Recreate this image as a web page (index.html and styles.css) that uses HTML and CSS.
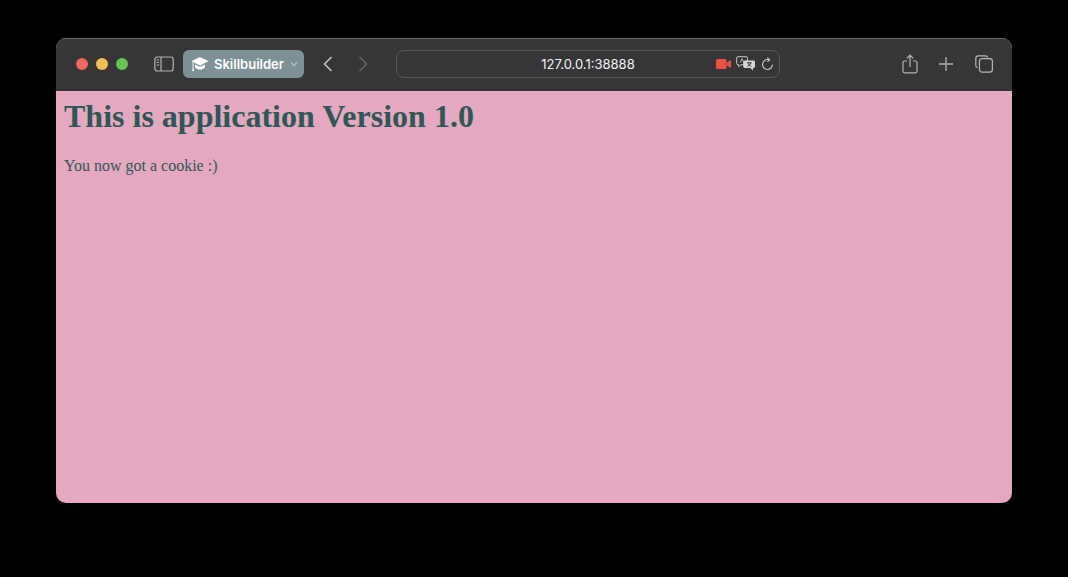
FILE: index.html
```html
<!DOCTYPE html>
<html lang="en">
<head>
    <meta charset="UTF-8">
    <title>Skillbuilder</title>
    <link rel="stylesheet" href="styles.css">
</head>
<body>
    <div class="window">
        <div class="toolbar">
            <div class="lights">
                <span class="light red"></span>
                <span class="light yellow"></span>
                <span class="light green"></span>
            </div>
            <svg class="sidebar-icon" width="20" height="16" viewBox="0 0 20 16" fill="none" stroke="#b4b4b4" stroke-width="1.2">
                <rect x="0.8" y="1" width="18.4" height="14" rx="2.5"/>
                <path d="M7 1v14"/>
                <path d="M2.6 4h2.6M2.6 6.5h2.6M2.6 9h2.6" stroke-width="1"/>
            </svg>
            <div class="profile">
                <svg class="cap" width="18" height="16" viewBox="0 0 18 16" fill="#fff">
                    <path d="M9 1 L17.6 5.2 L9 9.4 L0.4 5.2 Z"/>
                    <path d="M4 8.4 L9 10.8 L14 8.4 V11.4 C12.6 12.8 11 13.4 9 13.4 C7 13.4 5.4 12.8 4 11.4 Z"/>
                    <path d="M1.6 6 H2.5 V12 L3 15 H1.1 L1.6 12 Z"/>
                </svg>
                <span class="profile-name">Skillbuilder</span>
                <svg class="caret" width="8" height="6" viewBox="0 0 8 6" fill="none" stroke="#b3c0c3" stroke-width="1.3">
                    <path d="M1 1.5 L4 4.5 L7 1.5"/>
                </svg>
            </div>
            <svg class="back" width="10" height="16" viewBox="0 0 10 16" fill="none" stroke="#c4c4c4" stroke-width="1.6">
                <path d="M8.5 1 L1.5 8 L8.5 15"/>
            </svg>
            <svg class="forward" width="10" height="16" viewBox="0 0 10 16" fill="none" stroke="#626264" stroke-width="1.6">
                <path d="M1.5 1 L8.5 8 L1.5 15"/>
            </svg>
            <div class="address">
                <span class="url">127.0.0.1:38888</span>
                <div class="address-icons">
                    <svg width="15" height="10" viewBox="0 0 15 10" fill="#ee5246">
                        <rect x="0" y="0" width="10.5" height="10" rx="1.5"/>
                        <path d="M11 3.6 L15 1 V9 L11 6.4 Z"/>
                    </svg>
                    <svg width="20" height="15" viewBox="0 0 20 15">
                        <path d="M2 0.7 H10 Q11.4 0.7 11.4 2 V7.4 Q11.4 8.7 10 8.7 H5 L2.6 10.8 V8.7 H2 Q0.7 8.7 0.7 7.4 V2 Q0.7 0.7 2 0.7 Z" fill="#333335" stroke="#c8c8c8" stroke-width="1"/>
                        <path d="M8.6 4.6 H17.6 Q19 4.6 19 6 V10.6 Q19 12 17.6 12 H17 V14.4 L14.4 12 H8.6 Q7.2 12 7.2 10.6 V6 Q7.2 4.6 8.6 4.6 Z" fill="#d6d6d6"/>
                        <path d="M4.2 6.6 L6 2.6 L7.8 6.6" fill="none" stroke="#c8c8c8" stroke-width="0.9"/>
                        <path d="M11 6.8 H15.6 M13.3 6 V6.8 M14.8 6.8 C14.4 8.6 12.8 10 11.2 10.4 M11.8 6.8 C12.2 8.6 13.6 10 15.4 10.4" fill="none" stroke="#333335" stroke-width="0.9"/>
                    </svg>
                    <svg width="13" height="14" viewBox="0 0 13 14" fill="none" stroke="#c4c4c4" stroke-width="1.1">
                        <path d="M8 2.7 A5 5 0 1 0 11.5 7.6"/>
                        <path d="M6.2 0.6 L8.6 2.7 L6.4 4.8"/>
                    </svg>
                </div>
            </div>
            <div class="actions">
                <svg width="16" height="20" viewBox="0 0 16 20" fill="none" stroke="#b4b4b4" stroke-width="1.2">
                    <path d="M5 7 H2.8 Q1 7 1 8.8 V17 Q1 18.8 2.8 18.8 H13.2 Q15 18.8 15 17 V8.8 Q15 7 13.2 7 H11"/>
                    <path d="M8 13 V1.4 M4.8 4.4 L8 1.2 L11.2 4.4"/>
                </svg>
                <svg width="14" height="14" viewBox="0 0 14 14" fill="none" stroke="#b4b4b4" stroke-width="1.3">
                    <path d="M7 0 V14 M0 7 H14"/>
                </svg>
                <svg class="tabs" width="18" height="18" viewBox="0 0 18 18" fill="none" stroke="#b4b4b4" stroke-width="1.2">
                    <path d="M2.6 12.6 Q0.8 12.4 0.8 10.4 V3.4 Q0.8 0.8 3.4 0.8 H10.4 Q12.4 0.8 12.6 2.6"/>
                    <rect x="4.4" y="3.6" width="13" height="13.6" rx="2.6"/>
                </svg>
            </div>
        </div>
        <div class="content">
            <h1>This is application Version 1.0</h1>
            <p>You now got a cookie :)</p>
        </div>
    </div>
</body>
</html>
```

FILE: styles.css
```css
html, body {
    height: 100%;
}
body {
    margin: 0;
    padding: 38px 56px 74px;
    box-sizing: border-box;
    background-color: #000;
}
.window {
    height: 100%;
    display: flex;
    flex-direction: column;
    border-radius: 10px;
    overflow: hidden;
    background-color: #e5a8c1;
}
.toolbar {
    height: 53px;
    flex-shrink: 0;
    box-sizing: border-box;
    display: flex;
    align-items: center;
    background-color: #363638;
    border-top: 1px solid #6b6b6d;
    padding-left: 20px;
    padding-bottom: 2px;
}
.lights {
    display: flex;
    gap: 8px;
}
.light {
    width: 12px;
    height: 12px;
    border-radius: 50%;
}
.red {
    background-color: #ed6a5e;
}
.yellow {
    background-color: #f4bf4f;
}
.green {
    background-color: #61c554;
}
.sidebar-icon {
    margin-left: 26px;
}
.profile {
    width: 121px;
    height: 28px;
    margin-left: 9px;
    box-sizing: border-box;
    padding-left: 8px;
    display: flex;
    align-items: center;
    border-radius: 6px;
    background-color: #7d9196;
}
.profile-name {
    margin-left: 5px;
    font-family: "Inter", "Liberation Sans", sans-serif;
    font-size: 13px;
    font-weight: 600;
    color: #fff;
}
.caret {
    margin-left: 6px;
}
.back {
    margin-left: 19px;
}
.forward {
    margin-left: 25px;
}
.address {
    width: 384px;
    height: 28px;
    margin-left: 28px;
    box-sizing: border-box;
    display: flex;
    align-items: center;
    justify-content: center;
    position: relative;
    border: 1px solid #555557;
    border-radius: 8px;
}
.url {
    font-family: "Inter", "Liberation Sans", sans-serif;
    font-size: 13px;
    color: #f2f2f2;
}
.address-icons {
    position: absolute;
    right: 5px;
    top: 5px;
    display: flex;
    align-items: center;
    gap: 5px;
}
.actions {
    margin-left: 122px;
    display: flex;
    align-items: center;
    gap: 21px;
}
.tabs {
    margin-left: 1px;
}
.content {
    flex: 1;
    padding: 7px 8px 8px;
    font-family: "Liberation Serif", serif;
    color: #2f5757;
}
h1 {
    margin: 0;
    font-size: 32px;
    line-height: 37px;
    font-weight: bold;
}
p {
    margin: 22px 0 0;
    font-size: 16px;
    line-height: 18px;
}
```
